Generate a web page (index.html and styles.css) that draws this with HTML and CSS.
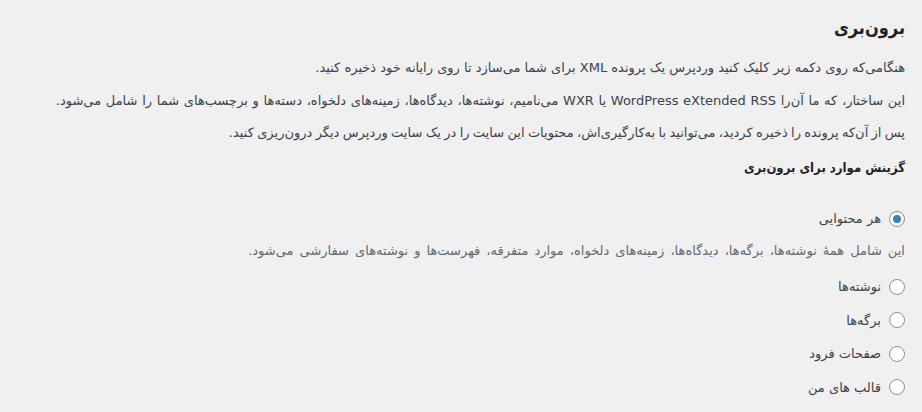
FILE: index.html
```html
<!DOCTYPE html>
<html lang="fa" dir="rtl">
<head>
<meta charset="utf-8">
<title>برون‌بری</title>
<link rel="stylesheet" href="styles.css">
</head>
<body>
<div class="wrap">
  <h1 class="page-title">برون‌بری</h1>
  <p class="intro">هنگامی‌که روی دکمه زیر کلیک کنید وردپرس یک پرونده XML برای شما می‌سازد تا روی رایانه خود ذخیره کنید.</p>
  <p class="intro loose">این ساختار، که ما آن‌را WordPress eXtended RSS یا WXR می‌نامیم، نوشته‌ها، دیدگاه‌ها، زمینه‌های دلخواه، دسته‌ها و برچسب‌های شما را شامل می‌شود.</p>
  <p class="intro tight">پس از آن‌که پرونده را ذخیره کردید، می‌توانید با به‌کارگیری‌اش، محتویات این سایت را در یک سایت وردپرس دیگر درون‌ریزی کنید.</p>
  <h2 class="section-title">گزینش موارد برای برون‌بری</h2>
  <form class="export-form">
    <label class="option first">
      <input class="radio" type="radio" name="content" value="all" checked>
      <span>هر محتوایی</span>
    </label>
    <p class="description">این شامل همهٔ نوشته‌ها، برگه‌ها، دیدگاه‌ها، زمینه‌های دلخواه، موارد متفرقه، فهرست‌ها و نوشته‌های سفارشی می‌شود.</p>
    <label class="option">
      <input class="radio" type="radio" name="content" value="posts">
      <span>نوشته‌ها</span>
    </label>
    <label class="option">
      <input class="radio" type="radio" name="content" value="pages">
      <span>برگه‌ها</span>
    </label>
    <label class="option">
      <input class="radio" type="radio" name="content" value="landing">
      <span>صفحات فرود</span>
    </label>
    <label class="option">
      <input class="radio" type="radio" name="content" value="templates">
      <span>قالب های من</span>
    </label>
  </form>
</div>
</body>
</html>
```
FILE: styles.css
```css
html, body {
  margin: 0;
  padding: 0;
  background: #f0f0f1;
}
body {
  font-family: "DejaVu Sans", "Noto Sans", sans-serif;
  font-size: 13px;
  color: #3c434a;
  direction: rtl;
  overflow: hidden;
}
.wrap {
  padding: 0 17px 0 20px;
}
.page-title {
  margin: 0 0 15px;
  padding-top: 13px;
  font-family: "DejaVu Sans Condensed", "DejaVu Sans", sans-serif;
  font-size: 18px;
  line-height: 30px;
  font-weight: 700;
  color: #1d2327;
}
.intro {
  margin: 13px 0;
  line-height: 19.5px;
}
.intro.loose {
  word-spacing: 0.55px;
}
.intro.tight {
  word-spacing: -0.8px;
}
.section-title {
  margin: 15px 0 31px;
  font-family: "DejaVu Sans Condensed", "DejaVu Sans", sans-serif;
  font-size: 13px;
  line-height: 20px;
  font-weight: 700;
  color: #1d2327;
}
.export-form {
  display: flex;
  flex-direction: column;
  align-items: flex-start;
}
.option {
  display: flex;
  align-items: center;
  gap: 8px;
  height: 20.5px;
  margin: 13px 0 0;
  color: #3c434a;
}
.option.first {
  margin-top: 0;
}
.description {
  margin: 12px 0 3px;
  line-height: 19.5px;
  color: #646970;
  word-spacing: 1.9px;
}
.radio {
  appearance: none;
  -webkit-appearance: none;
  margin: 0;
  width: 16px;
  height: 16px;
  border: 1px solid #8c8f94;
  border-radius: 50%;
  background: #fff;
  box-sizing: border-box;
  display: grid;
  place-items: center;
  flex: none;
}
.radio:checked::before {
  content: "";
  width: 8px;
  height: 8px;
  border-radius: 50%;
  background: #3582c4;
}
```
